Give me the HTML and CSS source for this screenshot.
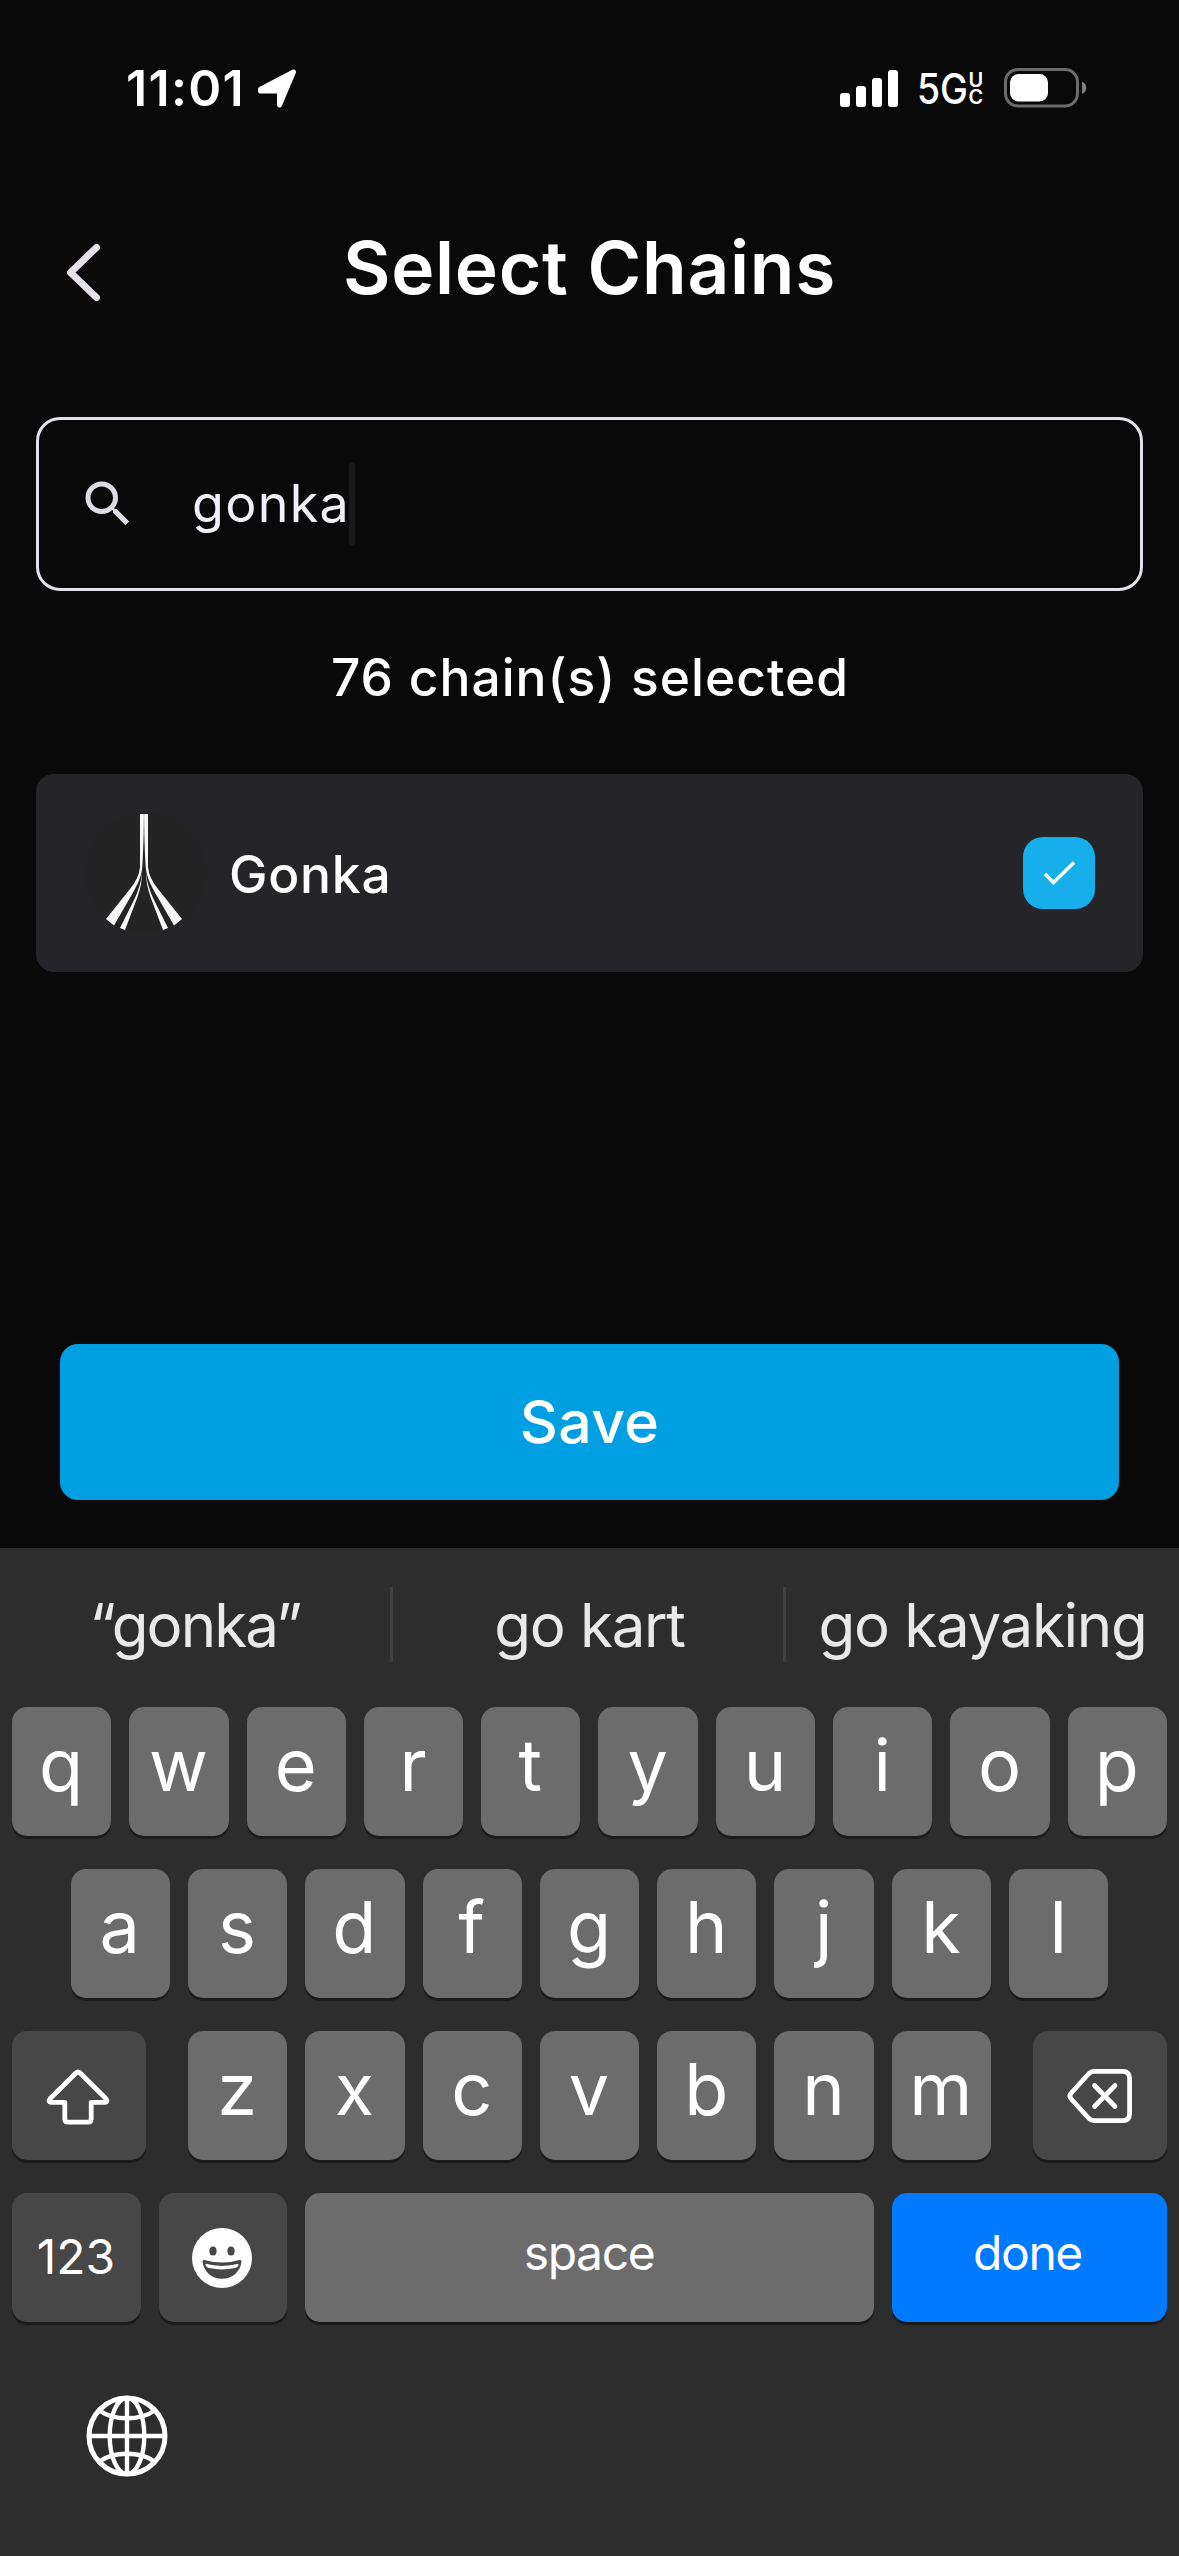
FILE: index.html
```html
<!DOCTYPE html>
<html lang="en">
<head>
<meta charset="utf-8">
<title>Select Chains</title>
<link rel="stylesheet" href="styles.css">
</head>
<body>
<div class="screen">
  <div class="status">
    <span class="time">11:01</span>
    <svg class="arrow" width="40" height="40" viewBox="0 0 40 40"><path d="M3.500 20.600 L36.500 3.500 L22.500 36.500 V22.500 H3.500 Z" fill="#fff" stroke="#fff" stroke-width="5" stroke-linejoin="round" transform="translate(0 .5)"/></svg>
    <svg class="signal" width="58" height="37" viewBox="0 0 58 37" fill="#fff"><rect x="0" y="23" width="10" height="14" rx="3"/><rect x="16" y="16" width="10" height="21" rx="3"/><rect x="32" y="8" width="10" height="29" rx="3"/><rect x="48" y="0" width="10" height="37" rx="3"/></svg>
    <svg class="network" width="70" height="60" viewBox="0 -10 70 60"><text class="net" x="0" y="36" textLength="51" lengthAdjust="spacingAndGlyphs">5G</text><text class="net-small" x="51.500" y="18.500">U</text><text class="net-small" x="51.500" y="36">C</text></svg>
    <svg class="battery" width="83" height="40" viewBox="0 0 83 40"><rect x="1.500" y="1.500" width="72" height="36.500" rx="12.500" fill="none" stroke="#6b6b6b" stroke-width="3"/><rect x="6" y="6" width="38" height="27.500" rx="8.500" fill="#fff"/><path d="M78 13.500 q4.200 2 4.200 6.200 t-4.200 6.200 Z" fill="#808080"/></svg>
  </div>

  <header class="header">
    <svg class="back" width="40" height="64" viewBox="0 0 40 64"><path d="M32.500 6.500 L6.500 31.500 L32.500 56.500" fill="none" stroke="#e6e0e9" stroke-width="7" stroke-linecap="round" stroke-linejoin="round"/></svg>
    <h1 class="title">Select Chains</h1>
  </header>

  <div class="search">
    <svg class="search-icon" width="60" height="60" viewBox="0 0 24 24" fill="#dddbe3"><path d="M15.500 14h-.79l-.28-.27A6.471 6.471 0 0 0 16 9.500 6.500 6.500 0 1 0 9.500 16c1.610 0 3.090-.59 4.230-1.570l.27.28v.79l5 4.990L20.490 19l-4.990-5zm-6 0C7.010 14 5 11.990 5 9.500S7.010 5 9.500 5 14 7.010 14 9.500 11.990 14 9.500 14z"/></svg>
    <span class="query">gonka</span><span class="caret"></span>
  </div>

  <p class="count">76 chain(s) selected</p>

  <div class="chain">
    <svg class="logo" width="120" height="120" viewBox="0 0 120 120">
      <circle cx="60" cy="60" r="60" fill="#242424"/>
      <g id="strand" fill="#f8f8f8">
        <path d="M54 1 H57.900 C57.900 20 57.200 40 56.200 55 C55 66 50 74 45 83 L28 112.500 L20 106 L44 76 Q53 65 54 54 Z"/>
        <path d="M56 60 C55 70 52 78 49 85 L34 115 L39 117 L51.500 84 C54.500 75 56 68 56 60 Z"/>
      </g>
      <use href="#strand" transform="translate(116 0) scale(-1 1)"/>
    </svg>
    <span class="name">Gonka</span>
    <span class="check"><svg width="72" height="72" viewBox="0 0 72 72"><path d="M22 37 L30.500 45.500 L51 25.500" fill="none" stroke="#fff" stroke-width="3.600"/></svg></span>
  </div>

  <button class="save">Save</button>

  <div class="keyboard">
    <div class="suggest">
      <span class="word">“gonka”</span><i class="rule"></i><span class="word">go kart</span><i class="rule"></i><span class="word">go kayaking</span>
    </div>
    <div class="keys">
      <div class="row"><b class="key">q</b><b class="key">w</b><b class="key">e</b><b class="key">r</b><b class="key">t</b><b class="key">y</b><b class="key">u</b><b class="key">i</b><b class="key">o</b><b class="key">p</b></div>
      <div class="row inset"><b class="key">a</b><b class="key">s</b><b class="key">d</b><b class="key">f</b><b class="key">g</b><b class="key">h</b><b class="key">j</b><b class="key">k</b><b class="key">l</b></div>
      <div class="row">
        <b class="key dark shift"><svg width="66" height="60" viewBox="0 0 66 60"><path d="M31.200 6.800 Q33 5 34.800 6.800 L60.800 32.500 Q63.500 36 59.500 36.300 H46.200 V53 Q46.200 56.200 43 56.200 H23 Q19.800 56.200 19.800 53 V36.300 H6.500 Q2.500 36 5.200 32.500 Z" fill="none" stroke="#fff" stroke-width="4.800" stroke-linejoin="round"/></svg></b>
        <b class="key">z</b><b class="key">x</b><b class="key">c</b><b class="key">v</b><b class="key">b</b><b class="key">n</b><b class="key">m</b>
        <b class="key dark erase"><svg width="68" height="58" viewBox="0 0 68 58"><path d="M28 4.400 H56.500 Q63.600 4.400 63.600 11.500 V46.500 Q63.600 53.600 56.500 53.600 H28 Q25 53.600 22.500 51 L5.200 32 Q2.600 29 5.200 26 L22.500 7 Q25 4.400 28 4.400 Z" fill="none" stroke="#fff" stroke-width="4.800" stroke-linejoin="round"/><path d="M28.500 18.500 L49 39.500 M49 18.500 L28.500 39.500" stroke="#fff" stroke-width="4.800" stroke-linecap="round"/></svg></b>
      </div>
      <div class="row">
        <b class="key dark num">123</b>
        <b class="key dark emoji"><svg width="60" height="60" viewBox="0 0 60 60"><circle cx="30" cy="30" r="30" fill="#fff"/><g fill="#474747"><ellipse cx="21" cy="23" rx="3.600" ry="4.500"/><ellipse cx="39" cy="23" rx="3.600" ry="4.500"/><path d="M10.500 33.500 Q10.300 31.500 12.500 32 Q30 37 47.500 32 Q49.700 31.500 49.500 33.500 C48.500 43.500 40.500 50.800 30 50.800 S11.500 43.500 10.500 33.500 Z"/></g><path d="M13.500 35.800 Q30 40 46.500 35.800 Q47 39 43 40 Q30 42.800 17 40 Q13 39 13.500 35.800 Z" fill="#fff"/></svg></b>
        <b class="key space">space</b>
        <b class="key done">done</b>
      </div>
    </div>
    <svg class="globe" width="82" height="82" viewBox="0 0 82 82" fill="none" stroke="#fff"><circle cx="41" cy="41" r="38" stroke-width="5"/><g stroke-width="4.400"><path d="M41 3 V79 M3 41 H79"/><ellipse cx="41" cy="41" rx="17.300" ry="38"/><path d="M13.500 15.500 Q24 23.300 41 23.300 T68.500 15.500 M13.500 66.500 Q24 58.700 41 58.700 T68.500 66.500"/></g></svg>
  </div>
</div>
</body>
</html>
```
FILE: styles.css
```css
* { box-sizing: border-box; }

body {
  margin: 0;
  background: #090909;
  color: #fff;
  font-family: Inter, "Liberation Sans", sans-serif;
}

svg { display: block; flex: none; }

.screen {
  width: 1179px;
  height: 2556px;
  overflow: hidden;
  display: flex;
  flex-direction: column;
}

/* Status bar */
.status {
  height: 176px;
  padding: 0 92px 0 126px;
  display: flex;
  align-items: center;
}
.time { font-size: 50px; font-weight: 600; letter-spacing: 1.300px; }
.arrow { margin-left: 12px; }
.signal { margin-left: auto; }
.network { margin-left: 19px; }
.battery { margin-left: 17px; }
.net { font-size: 42px; font-weight: 500; fill: #fff; }
.net-small { font-size: 20px; font-weight: 600; fill: #fff; }

/* Header */
.header {
  height: 183px;
  padding: 0 64px;
  display: grid;
  grid-template-columns: 40px 1fr 40px;
  align-items: center;
}
.back { margin-top: 11px; }
.title {
  margin: 0;
  text-align: center;
  font-size: 73px;
  font-weight: 600;
  letter-spacing: .7px;
}

/* Search field */
.search {
  height: 174px;
  margin: 58px 36px 0;
  padding-left: 39px;
  border: 3px solid #e3e1e9;
  border-radius: 24px;
  display: flex;
  align-items: center;
}
.query {
  margin: -2px 0 0 54px;
  font-size: 52px;
  font-weight: 400;
  letter-spacing: 1.300px;
  color: #f2f0f7;
}
.caret {
  width: 6px;
  height: 84px;
  margin-left: -1px;
  border-radius: 3px;
  background: #19191b;
}

.count {
  margin: 0 0 11px;
  padding-left: 1px;
  line-height: 172px;
  text-align: center;
  font-size: 51.500px;
  font-weight: 500;
  letter-spacing: 1px;
}

/* Chain card */
.chain {
  height: 198px;
  margin: 0 36px;
  padding: 0 48px 0 50px;
  border-radius: 18px;
  background: #252429;
  display: flex;
  align-items: center;
}
.name {
  margin: 2px 0 0 23px;
  font-size: 51.500px;
  font-weight: 500;
  letter-spacing: .750px;
}
.check {
  margin-left: auto;
  border-radius: 20px;
  background: #16aeeb;
}

.save {
  height: 156px;
  margin: 372px 60px 48px;
  padding: 0 0 2px;
  border: 0;
  border-radius: 18px;
  background: #009fe1;
  color: #fff;
  font: 500 59px Inter, "Liberation Sans", sans-serif;
  letter-spacing: .340px;
}

/* Keyboard */
.keyboard { flex: 1; background: #2d2d2d; }
.suggest {
  height: 153px;
  display: grid;
  grid-template-columns: 390px 3px 390px 3px 1fr;
  align-items: center;
}
.word {
  text-align: center;
  white-space: nowrap;
  font-size: 60px;
  letter-spacing: -1.300px;
  color: #e9e9e9;
}
.word:first-child { letter-spacing: -1.880px; }
.word:nth-child(3) { padding-left: 3px; }
.rule { width: 3px; height: 75px; border-radius: 1px; background: #414141; }

.keys {
  padding: 6px 12px 0;
  display: grid;
  gap: 33px;
}
.row { height: 129px; display: flex; gap: 18px; }
.inset { padding: 0 58.600px; }
.key {
  flex: 1 1 0;
  min-width: 0;
  padding: 0 1px 14px 0;
  border-radius: 15px;
  background: #6c6c6c;
  box-shadow: 0 3px 0 #1b1b1b;
  display: flex;
  align-items: center;
  justify-content: center;
  font-size: 72px;
  font-weight: 400;
}
.dark { background: #474747; padding-bottom: 0; }
.shift { flex: 0 0 134px; margin-right: 24px; padding-right: 3px; }
.erase { flex: 0 0 134px; margin-left: 24px; padding-right: 0; }
.num {
  flex: 0 0 129px;
  padding-bottom: 2px;
  font-size: 48px;
}
.emoji { flex: 0 0 128px; padding: 0 2px 0 0; }
.space, .done {
  padding-bottom: 10px;
  font-size: 48px;
  letter-spacing: -1.400px;
}
.done { flex: 0 0 275px; padding-right: 4px; background: #007aff; }

.globe { margin: 73px 0 0 86px; }
```
